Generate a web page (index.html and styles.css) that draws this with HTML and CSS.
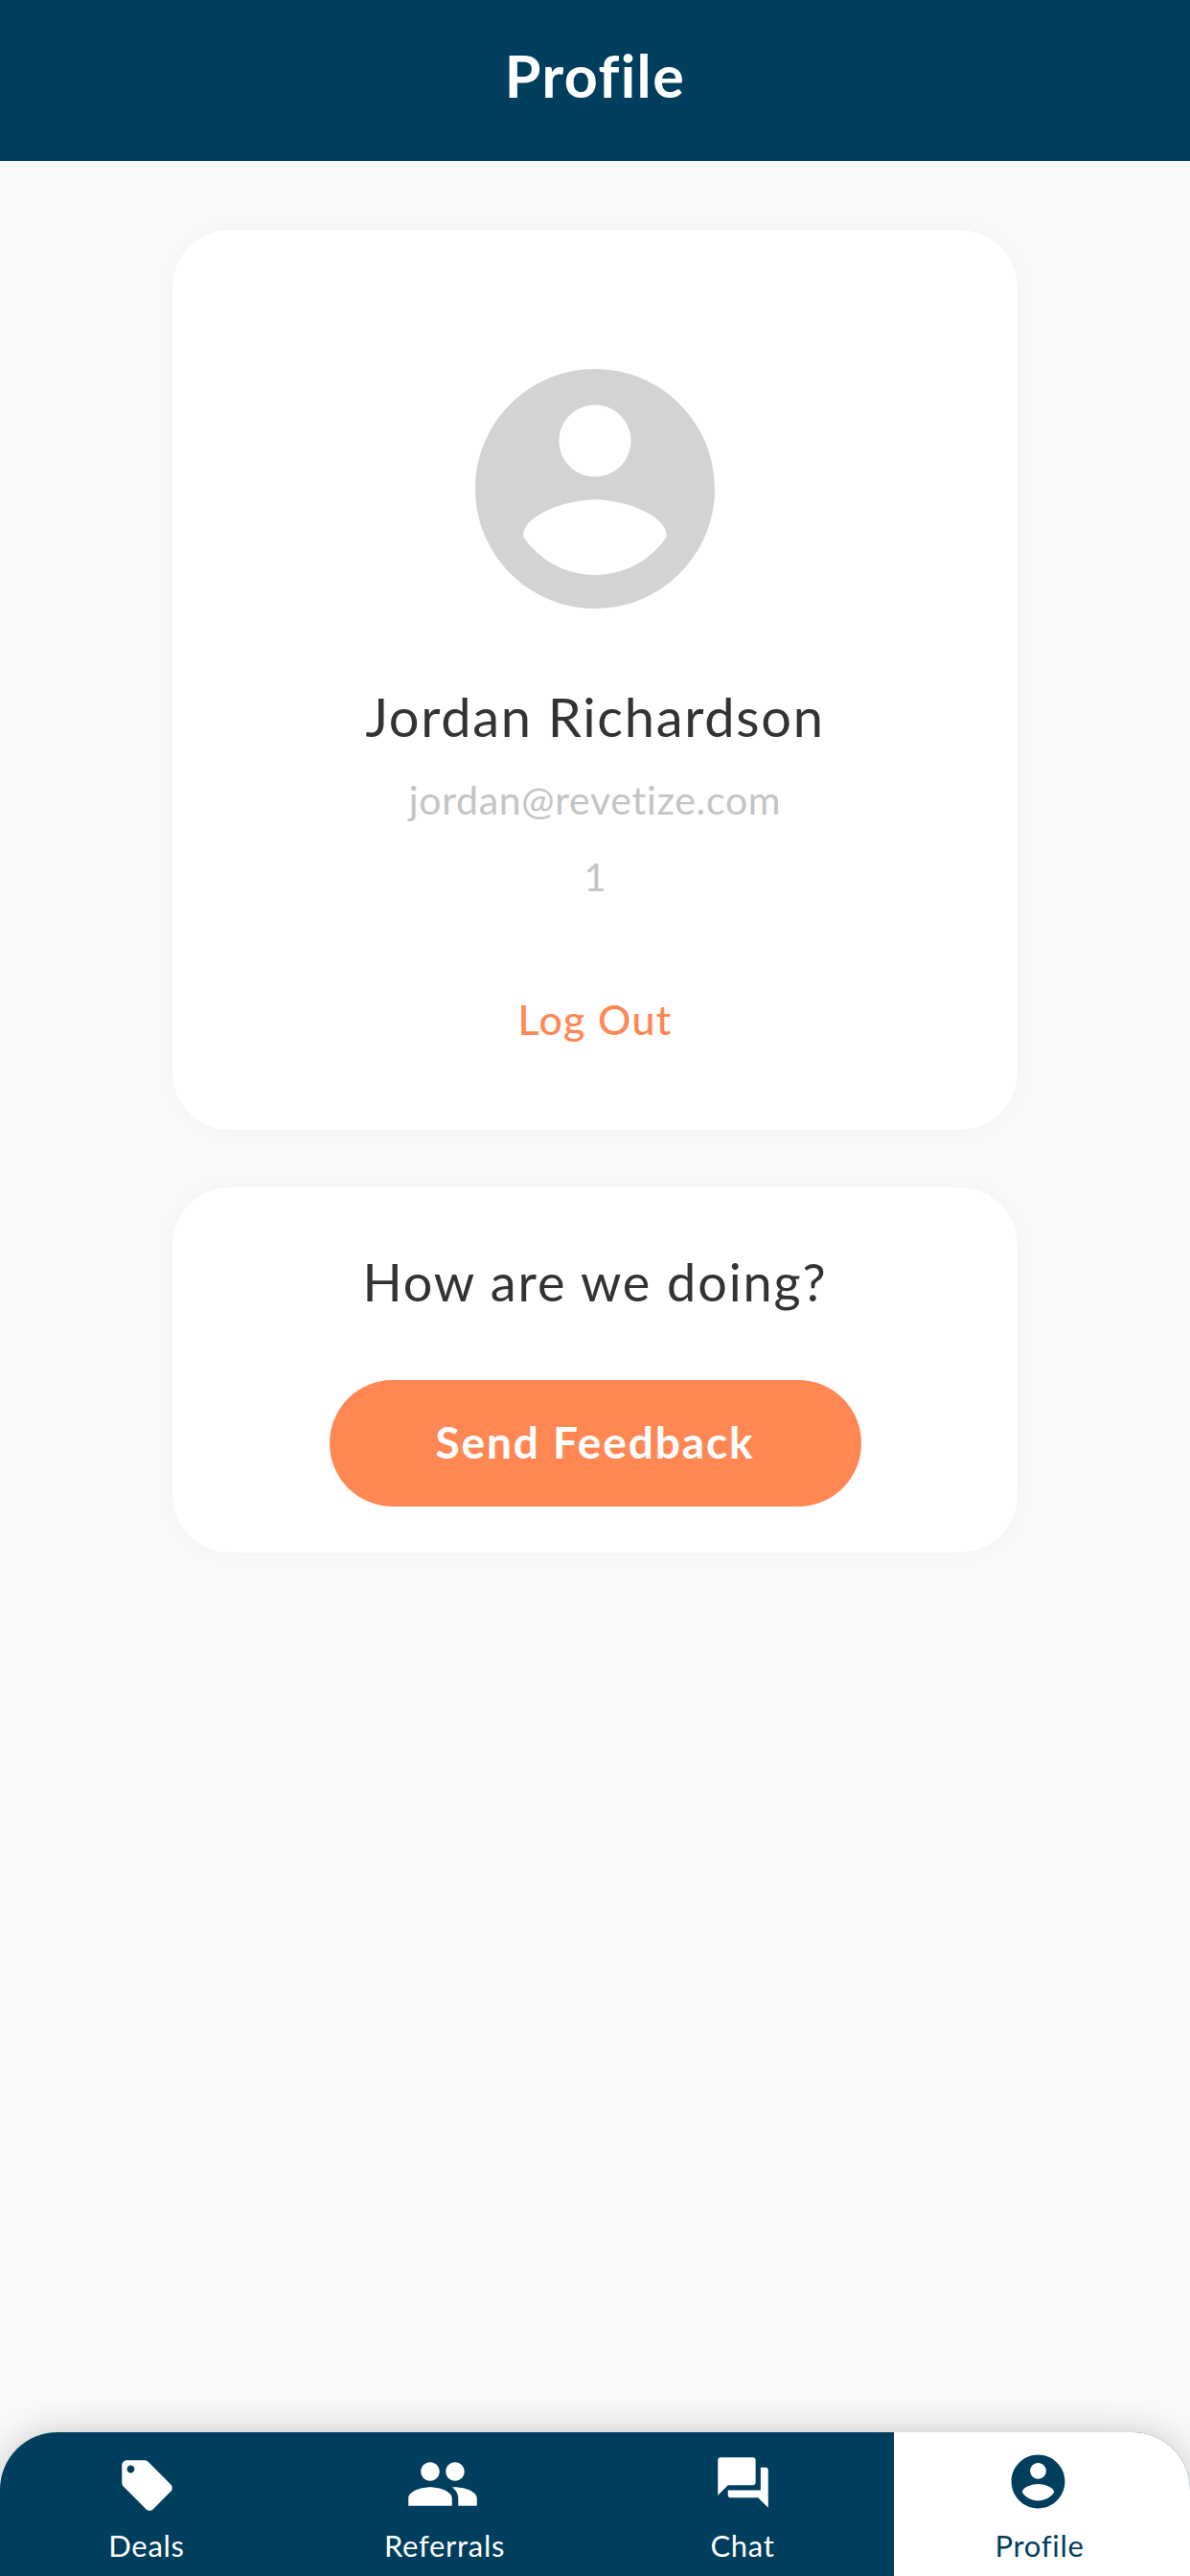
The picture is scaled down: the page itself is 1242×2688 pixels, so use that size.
FILE: index.html
```html
<!DOCTYPE html>
<html lang="en">
<head>
    <meta charset="UTF-8">
    <title>Profile</title>
    <link rel="stylesheet" href="styles.css">
</head>
<body>
<div class="app">
    <div class="header">Profile</div>
    <div class="main">
        <div class="card cardUser">
            <svg class="avatar" viewBox="0 0 24 24"><path d="M12 2C6.48 2 2 6.48 2 12s4.48 10 10 10 10-4.48 10-10S17.52 2 12 2zm0 3c1.66 0 3 1.34 3 3s-1.34 3-3 3-3-1.34-3-3 1.34-3 3-3zm0 14.2c-2.5 0-4.71-1.28-6-3.22.03-1.99 4-3.08 6-3.08 1.99 0 5.97 1.09 6 3.08-1.29 1.94-3.5 3.22-6 3.22z"/></svg>
            <div class="name">Jordan Richardson</div>
            <div class="email">jordan@revetize.com</div>
            <div class="userId">1</div>
            <div class="logout">Log Out</div>
        </div>
        <div class="card cardFeedback">
            <div class="ask">How are we doing?</div>
            <div class="btn">Send Feedback</div>
        </div>
    </div>
    <div class="nav">
        <div class="tab">
            <div class="iconBox"><svg class="icon iconDeals" viewBox="0 0 24 24"><path d="M21.41 11.58l-9-9C12.05 2.22 11.55 2 11 2H4c-1.1 0-2 .9-2 2v7c0 .55.22 1.05.59 1.42l9 9c.36.36.86.58 1.41.58.55 0 1.05-.22 1.41-.59l7-7c.37-.36.59-.86.59-1.41 0-.55-.23-1.06-.59-1.42zM5.5 7C4.67 7 4 6.33 4 5.5S4.67 4 5.5 4 7 4.67 7 5.5 6.33 7 5.5 7z"/></svg></div>
            <div class="label">Deals</div>
        </div>
        <div class="tab">
            <div class="iconBox"><svg class="icon iconReferrals" viewBox="0 0 24 24"><path d="M16 11c1.66 0 2.99-1.34 2.99-3S17.66 5 16 5c-1.66 0-3 1.34-3 3s1.34 3 3 3zm-8 0c1.66 0 2.99-1.34 2.99-3S9.66 5 8 5C6.34 5 5 6.34 5 8s1.34 3 3 3zm0 2c-2.33 0-7 1.17-7 3.5V19h14v-2.5c0-2.33-4.67-3.5-7-3.5zm8 0c-.29 0-.62.02-.97.05 1.16.84 1.97 1.97 1.97 3.45V19h6v-2.5c0-2.33-4.67-3.5-7-3.5z"/></svg></div>
            <div class="label">Referrals</div>
        </div>
        <div class="tab">
            <div class="iconBox"><svg class="icon iconChat" viewBox="0 0 24 24"><path d="M21 6h-2v9H6v2c0 .55.45 1 1 1h11l4 4V7c0-.55-.45-1-1-1zm-4 6V3c0-.55-.45-1-1-1H3c-.55 0-1 .45-1 1v14l4-4h10c.55 0 1-.45 1-1z"/></svg></div>
            <div class="label">Chat</div>
        </div>
        <div class="tab on">
            <div class="iconBox"><svg class="icon iconProfile" viewBox="0 0 24 24"><path d="M12 2C6.48 2 2 6.48 2 12s4.48 10 10 10 10-4.48 10-10S17.52 2 12 2zm0 3c1.66 0 3 1.34 3 3s-1.34 3-3 3-3-1.34-3-3 1.34-3 3-3zm0 14.2c-2.5 0-4.71-1.28-6-3.22.03-1.99 4-3.08 6-3.08 1.99 0 5.97 1.09 6 3.08-1.29 1.94-3.5 3.22-6 3.22z"/></svg></div>
            <div class="label">Profile</div>
        </div>
    </div>
</div>
</body>
</html>
```

FILE: styles.css
```css
*{
    margin:0;
    padding:0;
    box-sizing: border-box;
}
body{
    background: #fafafa;
    font-family: "Lato", "Liberation Sans", sans-serif;
    font-variant-ligatures: none;
}
.app{
    width: 1242px;
    height:2688px;
    display: flex;
    flex-direction: column;
    overflow: hidden;
}
.header{
    height:168px;
    background: #003e5e;
    color: #fff;
    font-size: 61px;
    font-weight: 700;
    line-height: 158px;
    letter-spacing: 1.4px;
    text-align: center;
}
.main{
    flex: 1;
    display: flex;
    flex-direction: column;
    align-items: center;
    gap: 60px;
    padding-top: 72px;
}
.card{
    width: 882px;
    background: #fff;
    border-radius: 60px;
    box-shadow: 0 0 30px rgba(0,0,0,.04);
    display: flex;
    flex-direction: column;
    align-items: center;
    text-align: center;
}
.cardUser{
    height:939px;
    padding-top: 120px;
}
.cardFeedback{
    height:381px;
    padding-top: 64px;
}
.avatar{
    width: 300px;
    height:300px;
    fill: #d3d3d3;
}
.name{
    margin-top: 53px;
    font-size: 56px;
    line-height: 70px;
    color: #333;
    letter-spacing: 1.7px;
}
.email{
    margin-top: 27px;
    font-size: 41px;
    line-height: 50px;
    color: #c4c4c4;
    letter-spacing: .7px;
}
.userId{
    margin-top: 30px;
    font-size: 40px;
    line-height: 50px;
    color: #c4c4c4;
}
.logout{
    margin-top: 99px;
    font-size: 43px;
    line-height: 50px;
    font-weight: 500;
    color: #ff8753;
    letter-spacing: 1.3px;
}
.ask{
    font-size: 54px;
    line-height: 70px;
    color: #333;
    letter-spacing: 1.9px;
}
.btn{
    margin-top: 67px;
    width: 555px;
    height:132px;
    border-radius: 66px;
    background: #ff8753;
    color: #fff;
    font-size: 46px;
    font-weight: 700;
    line-height: 130px;
    letter-spacing: 1.9px;
}
.nav{
    position: relative;
    height:150px;
    display: flex;
    border-radius: 60px 60px 0 0;
    background: #003e5e;
    box-shadow: 0 0 40px rgba(0,0,0,.2);
    overflow: hidden;
}
.tab{
    width: 311px;
    padding-right: 5px;
    display: flex;
    flex-direction: column;
    align-items: center;
    color: #fff;
}
.tab.on{
    width: 309px;
    background: #fff;
    color: #003e5e;
}
.iconBox{
    height:100px;
    display: flex;
    justify-content: center;
}
.icon{
    fill: currentColor;
}
.iconDeals{
    width: 63px;
    height:63px;
    margin-top: 24px;
}
.iconReferrals{
    width: 78px;
    height:78px;
    margin-top: 15px;
    margin-right: 5px;
}
.iconChat{
    width: 63px;
    height:63px;
    margin-top: 21px;
}
.iconProfile{
    width: 67px;
    height:67px;
    margin-top: 18px;
    margin-right: 4px;
}
.label{
    font-size: 31px;
    line-height: 36px;
    letter-spacing: .7px;
}
```
